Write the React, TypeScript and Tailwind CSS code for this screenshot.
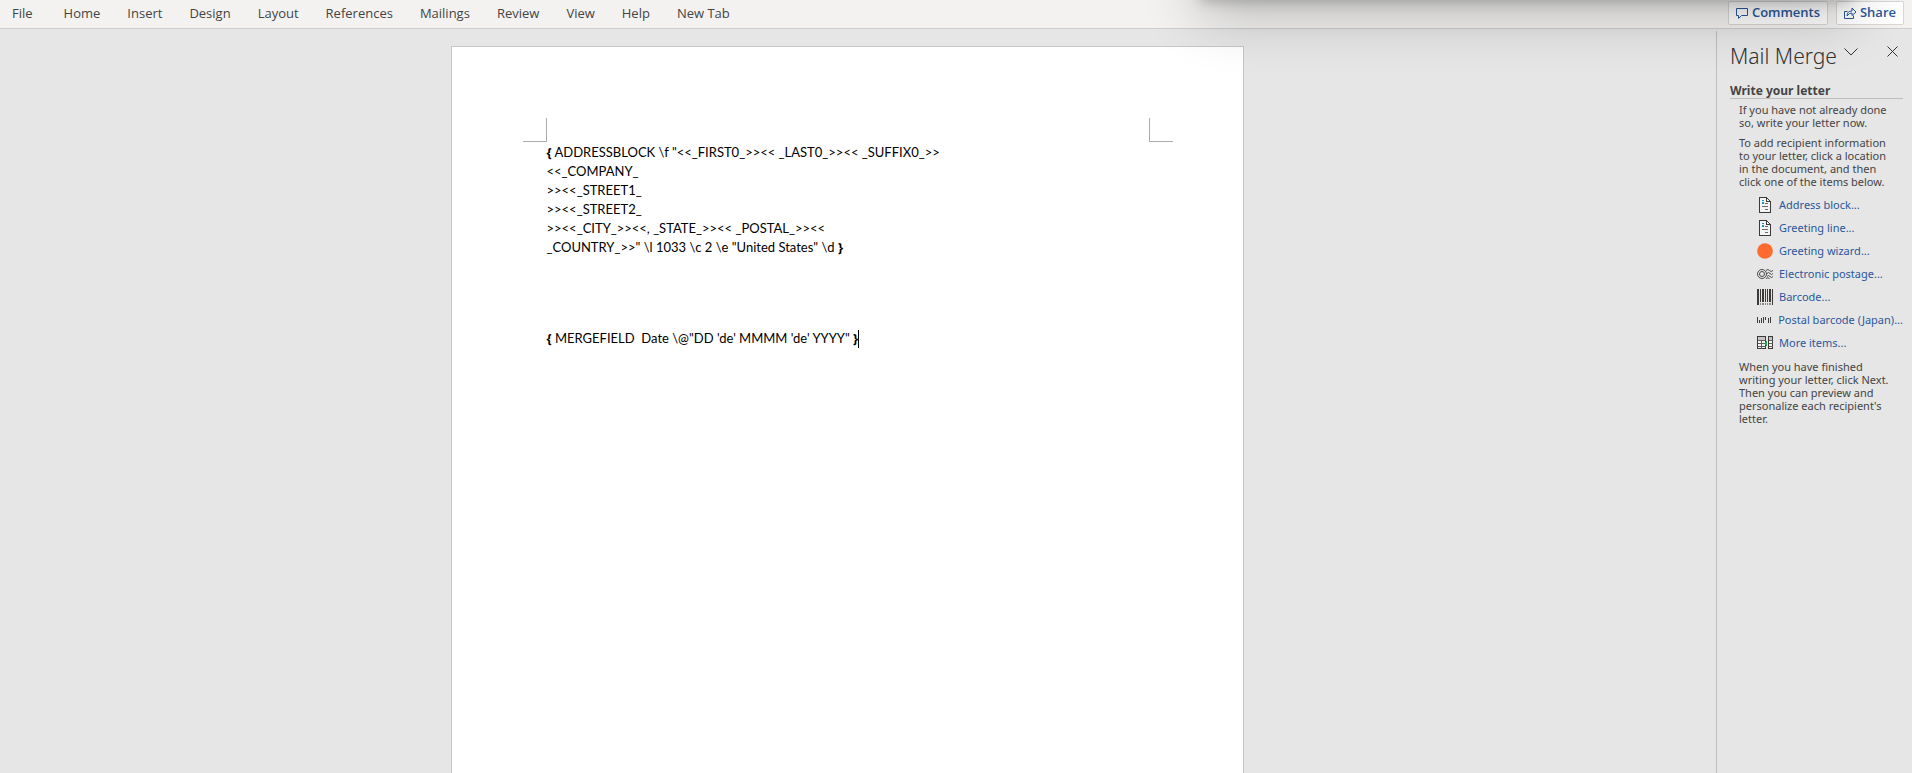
import type { ReactNode } from "react";
import { clsx } from "clsx";

const TABS = ["File", "Home", "Insert", "Design", "Layout", "References", "Mailings", "Review", "View", "Help", "New Tab"];

function LetterIcon() {
  return (
    <svg width="16" height="16" viewBox="0 0 16 16" fill="none" shapeRendering="crispEdges">
      <path d="M3 1h7l4 4v10H3z" fill="#f4f4f4" />
      <path d="M2 0h8v1H3v14h10V5h1v11H2zM9 1h1v3h4v1H9zM10 1h1v1h-1zM11 2h1v1h-1zM12 3h1v1h-1z" fill="#3b3a39" />
      <path d="M5 3h2v1H5zM5 5h2v2H5z" fill="#1e8bcd" />
      <path d="M8 6h3v1H8zM5 9h6v1H5zM8 12h3v1H8z" fill="#6b6a69" />
    </svg>
  );
}

function WizardIcon() {
  return (
    <svg width="16" height="16" viewBox="0 0 16 16">
      <circle cx="8" cy="8" r="7.8" fill="#ff6a2f" />
    </svg>
  );
}

function PostageIcon() {
  return (
    <svg width="16" height="16" viewBox="0 0 16 16" fill="none" stroke="#4a4948">
      <circle cx="5" cy="8" r="4.5" />
      <circle cx="5" cy="8" r="2.5" />
      <path d="M9 4.500q2-2 3.500 0t3.500 0M10 7.500q1.500-2 3 0t3 0M10 10.500q1.500-2 3 0t3 0M9 12.500q2-1.500 3.500 0" />
    </svg>
  );
}

function BarcodeIcon() {
  return (
    <svg width="16" height="16" viewBox="0 0 16 16" fill="#3b3a39" shapeRendering="crispEdges">
      <path d="M0 0h2v16H0zM3 0h1v13H3zM5 0h2v13H5zM8 0h1v13H8zM10 0h1v13h-1zM12 0h2v13h-2zM15 0h1v16h-1z" />
      <path d="M3 14h1v2H3zM5 14h2v2H5zM8 14h1v2H8zM10 14h1v2h-1zM12 14h2v2h-2z" fill="#8a8988" />
    </svg>
  );
}

function PostalBarcodeIcon() {
  return (
    <svg width="16" height="16" viewBox="0 0 16 16" fill="#3b3a39" shapeRendering="crispEdges">
      <path d="M0 5h1v6H0zM2 8h1v3H2zM4 6h1v5H4zM6 5h1v6H6zM8 5h1v3H8zM10 5h1v4h-1zM12 6h1v5h-1zM14 5h1v6h-1z" />
    </svg>
  );
}

function MoreItemsIcon() {
  return (
    <svg width="16" height="16" viewBox="0 0 16 16" fill="none" shapeRendering="crispEdges">
      <path d="M1 2h8v11H1zM12 2h3v11h-3z" fill="#f4f4f4" />
      <path d="M1 2h8v3H1zM12 2h3v3h-3z" fill="#c8c6c4" />
      <path d="M0.500 1.500h8v12h-8zM11.500 1.500h4v12h-4z" stroke="#3b3a39" />
      <path d="M0.500 5.500h8M0.500 8.500h8M0.500 11.500h8M4.500 5.500v8M11.500 5.500h4M11.500 8.500h4M11.500 11.500h4" stroke="#5f5e5d" />
      <path d="M7 8.500l3-3v6z" fill="#2e9e4f" />
    </svg>
  );
}

const ITEMS: { label: string; icon: ReactNode }[] = [
  { label: "Address block...", icon: <LetterIcon /> },
  { label: "Greeting line...", icon: <LetterIcon /> },
  { label: "Greeting wizard...", icon: <WizardIcon /> },
  { label: "Electronic postage...", icon: <PostageIcon /> },
  { label: "Barcode...", icon: <BarcodeIcon /> },
  { label: "Postal barcode (Japan)...", icon: <PostalBarcodeIcon /> },
  { label: "More items...", icon: <MoreItemsIcon /> },
];

const ADDRESS_LINES = [
  ' ADDRESSBLOCK \\f "<<_FIRST0_>><< _LAST0_>><< _SUFFIX0_>>',
  "<<_COMPANY_",
  ">><<_STREET1_",
  ">><<_STREET2_",
  ">><<_CITY_>><<, _STATE_>><< _POSTAL_>><<",
  '_COUNTRY_>>" \\l 1033 \\c 2 \\e "United States" \\d ',
];

function Ribbon() {
  return (
    <header className="flex h-[29px] items-start justify-between border-b border-[#cdcdcd] bg-[#f3f2f1] pt-px pr-2 pl-3 font-['Open_Sans',sans-serif] text-[13px]">
      <nav className="flex gap-[27px] leading-6 text-[#444444]">
        {TABS.map((tab) => (
          <button key={tab} type="button" className="first:mr-1">
            {tab}
          </button>
        ))}
      </nav>
      <div className="flex gap-2 font-semibold text-[#2b579a]">
        <RibbonButton label="Comments" className="w-[100px]">
          <path d="M0.500 1.500h11v7h-6l-3 3v-3h-2z" />
        </RibbonButton>
        <RibbonButton label="Share" className="w-[68px]">
          <path d="M3.500 4.500h-3v7h9v-3M3 9q0-5 5-5V1l4 4-4 3.500v-2.500q-3 0-5 3z" />
        </RibbonButton>
      </div>
    </header>
  );
}

function RibbonButton({ label, className, children }: { label: string; className: string; children: ReactNode }) {
  return (
    <button
      type="button"
      className={clsx("flex h-6 items-center justify-center gap-1 rounded-xs border border-[#d8d7d6] bg-white", className)}
    >
      <svg width="12" height="12" viewBox="0 0 12 12" fill="none" stroke="currentColor">
        {children}
      </svg>
      {label}
    </button>
  );
}

function Brace({ children }: { children: string }) {
  return <b className="font-['Open_Sans',sans-serif] font-bold">{children}</b>;
}

function DocumentPage() {
  return (
    <article className="min-h-[1122px] w-[793px] border border-[#c6c6c6] bg-white">
      <div className="flex justify-between pt-[71px] pr-[70px] pl-[71px]">
        <span className="size-6 border-r border-b border-[#ababab]" />
        <span className="size-6 border-b border-l border-[#ababab]" />
      </div>
      <div className="px-[95px] pt-px font-[Lato,sans-serif] text-[13px] leading-[19px] whitespace-pre text-black">
        <p>
          {ADDRESS_LINES.map((line, i) => (
            <span key={line} className="block">
              {i === 0 && <Brace>{"{"}</Brace>}
              {line}
              {i === ADDRESS_LINES.length - 1 && <Brace>{"}"}</Brace>}
            </span>
          ))}
        </p>
        <p className="mt-[72px] flex items-center">
          <Brace>{"{"}</Brace>
          {" MERGEFIELD  Date \\@\"DD 'de' MMMM 'de' YYYY\" "}
          <Brace>{"}"}</Brace>
          <span className="h-[18px] w-px bg-black" />
        </p>
      </div>
    </article>
  );
}

function MailMergePane() {
  return (
    <aside className="mt-[2px] w-[196px] shrink-0 border-l border-[#bdbdbd] pr-[9px] pl-[13px] text-[11px] leading-[13px] text-[#444444]">
      <div className="flex items-start pt-[9px] text-[#333333]">
        <h1 className="text-[21px] leading-8 font-light whitespace-nowrap">Mail Merge</h1>
        <button type="button" aria-label="Pane options" className="mt-2 ml-[7px]">
          <svg width="14" height="8" viewBox="0 0 14 8" fill="none" stroke="currentColor">
            <path d="M0.500 0.500L7 7L13.500 0.500" />
          </svg>
        </button>
        <button type="button" aria-label="Close" className="mt-[6px] mr-[5px] ml-auto">
          <svg width="11" height="11" viewBox="0 0 11 11" fill="none" stroke="currentColor">
            <path d="M0.500 0.500l10 10M10.500 0.500l-10 10" />
          </svg>
        </button>
      </div>
      <h2 className="mt-3 border-b border-[#bdbdbd] text-[12px] leading-[14px] font-bold">Write your letter</h2>
      <div className="pt-1 pl-[9px]">
        <p className="whitespace-nowrap">
          If you have not already done
          <br />
          so, write your letter now.
        </p>
        <p className="mt-[7px] whitespace-nowrap">
          To add recipient information
          <br />
          to your letter, click a location
          <br />
          in the document, and then
          <br />
          click one of the items below.
        </p>
        <ul className="mt-[5px] pl-[18px] text-[#2b579a]">
          {ITEMS.map(({ label, icon }) => (
            <li key={label}>
              <a href="#" className="flex h-[23px] items-center gap-[6px] whitespace-nowrap">
                {icon}
                {label}
              </a>
            </li>
          ))}
        </ul>
        <p className="mt-[6px] whitespace-nowrap">
          When you have finished
          <br />
          writing your letter, click Next.
          <br />
          Then you can preview and
          <br />
          personalize each recipient's
          <br />
          letter.
        </p>
      </div>
    </aside>
  );
}

export default function App() {
  return (
    <div className="relative flex h-screen flex-col overflow-hidden bg-[#e6e6e6] font-['Noto_Sans',sans-serif]">
      <Ribbon />
      <div className="flex min-h-0 flex-1">
        <main className="flex min-w-0 flex-1 justify-center overflow-hidden pt-[17px] pr-[22px]">
          <DocumentPage />
        </main>
        <MailMergePane />
      </div>
      {/* shadow cast by a window above this one */}
      <div className="pointer-events-none absolute -top-20 right-[60px] left-[1200px] h-20 shadow-[0_2px_12px_rgba(0,0,0,0.2),0_16px_56px_rgba(0,0,0,0.24)]" />
    </div>
  );
}
